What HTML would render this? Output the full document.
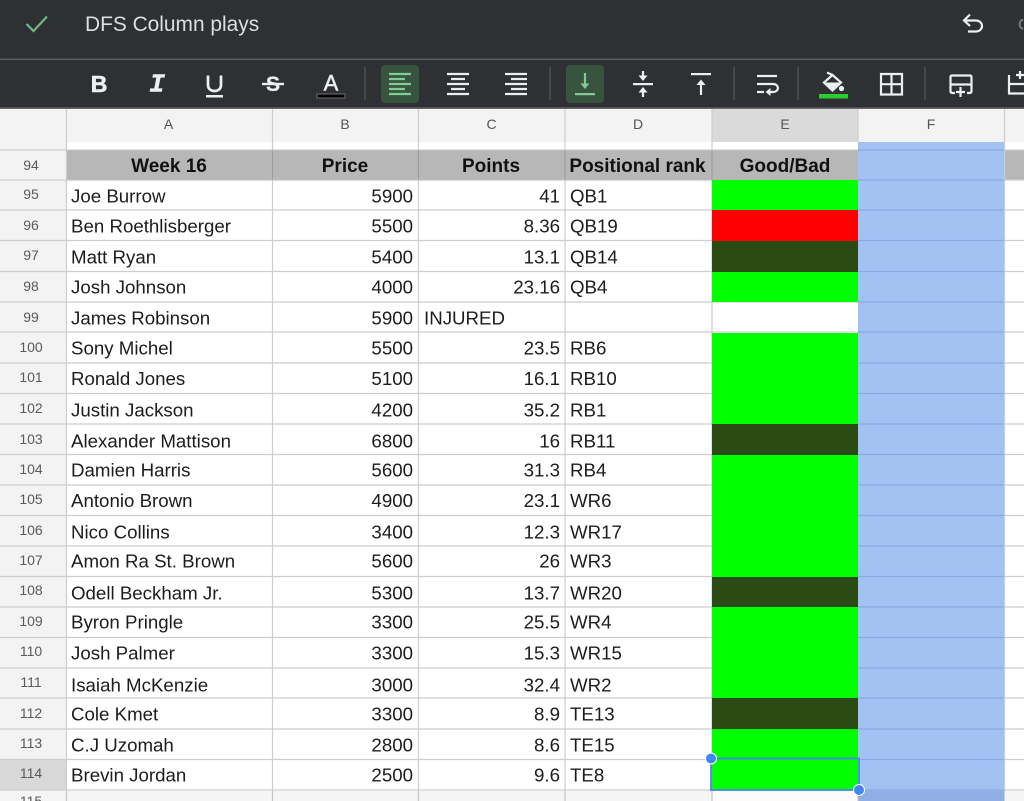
<!DOCTYPE html>
<html>
<head>
<meta charset="utf-8">
<style>
html,body{margin:0;padding:0;background:#fff;width:1024px;height:801px;overflow:hidden}
svg{display:block;filter:blur(0.3px)}
text{font-family:"Liberation Sans",sans-serif}
.t{font-size:18.7px;fill:#1c1c1c}
.r{font-size:18.7px;fill:#1c1c1c;text-anchor:end}
.h{font-size:19px;font-weight:bold;fill:#111;text-anchor:middle}
.n{font-size:14px;fill:#5a5a5a;text-anchor:middle}
.c{font-size:14px;fill:#555;text-anchor:middle}
.ic{fill:none;stroke:#eceff1;stroke-width:2.2}
.gl{stroke:#cdcdcd;stroke-width:1.2;fill:none}
.bl{stroke:#8aa9df;stroke-width:1.2;fill:none}
.sep{stroke:#56585b;stroke-width:1.2}
</style>
</head>
<body>
<svg width="1024" height="801" viewBox="0 0 1024 801" xmlns="http://www.w3.org/2000/svg">
<!-- top bars -->
<rect x="0" y="0" width="1024" height="109" fill="#2f3033"/>
<rect x="0" y="58.5" width="1024" height="1.5" fill="#5c5d60"/>
<rect x="0" y="107.5" width="1024" height="1.6" fill="#6a6b6d"/>
<path d="M26.500 24L33.500 31L47 16.500" fill="none" stroke="#6fb783" stroke-width="2.200"/>
<text x="85" y="31" font-size="20.900" fill="#dcdee0">DFS Column plays</text>
<path d="M970 14.500L964 20.500L970 26M965 20.500H976C979.500 20.500 982 23 982 26C982 29 979.500 31.500 976 31.500H968" class="ic"/>
<path d="M1023 19.500A5 5 0 0 0 1023 29" fill="none" stroke="#77797c" stroke-width="2"/>

<!-- B I U S A -->
<text x="99" y="92" font-size="23" font-weight="bold" fill="#eceff1" stroke="#eceff1" stroke-width="0.600" text-anchor="middle">B</text>
<text x="157" y="91.500" font-size="26" font-weight="bold" font-style="italic" fill="#eceff1" stroke="#eceff1" stroke-width="0.500" text-anchor="middle" style="font-family:'Liberation Mono',monospace">I</text>
<path d="M208 75.500V85C208 89 211 91 214.500 91C218 91 221 89 221 85V75.500" fill="none" stroke="#eceff1" stroke-width="2.700"/>
<rect x="206" y="95" width="17" height="2.500" fill="#eceff1"/>
<text x="273" y="91" font-size="21" font-weight="bold" fill="#eceff1" stroke="#eceff1" stroke-width="0.300" text-anchor="middle">S</text>
<rect x="262" y="82.800" width="22" height="2.400" fill="#eceff1"/>
<text x="331" y="90.500" font-size="22" fill="#eceff1" stroke="#eceff1" stroke-width="0.500" text-anchor="middle">A</text>
<rect x="317" y="94" width="28" height="4" fill="#000" stroke="#707174" stroke-width="1"/>
<line x1="365" y1="67" x2="365" y2="100" class="sep"/>

<!-- align -->
<rect x="381" y="65" width="38" height="38" rx="4" fill="#38543f"/>
<path d="M389 74H411M389 79H405M389 84H411M389 89H405M389 94H411" stroke="#81c995" stroke-width="2.200"/>
<g stroke="#eceff1" stroke-width="2.200">
<path d="M447 74H469M451 79H465M447 84H469M451 89H465M447 94H469"/>
<path d="M505 74H527M511 79H527M505 84H527M511 89H527M505 94H527"/>
</g>
<line x1="550" y1="67" x2="550" y2="100" class="sep"/>

<!-- vertical align -->
<rect x="566" y="65" width="38" height="38" rx="4" fill="#38543f"/>
<path d="M585 73V87" stroke="#81c995" stroke-width="2.200"/>
<path d="M580.500 83.500H589.500L585 89Z" fill="#81c995"/>
<rect x="575" y="93" width="20" height="2.200" fill="#81c995"/>
<rect x="633" y="83" width="20" height="2.200" fill="#eceff1"/>
<path d="M643 71V77M643 91V97" stroke="#eceff1" stroke-width="2.200"/>
<path d="M638.500 75.500H647.500L643 81Z M638.500 92.500H647.500L643 87Z" fill="#eceff1"/>
<rect x="691" y="73" width="20" height="2.200" fill="#eceff1"/>
<path d="M701 83V95" stroke="#eceff1" stroke-width="2.200"/>
<path d="M696.500 85H705.500L701 79.500Z" fill="#eceff1"/>
<line x1="734" y1="67" x2="734" y2="100" class="sep"/>

<!-- wrap -->
<path d="M757 76H777M757 84H773C779.500 84 779.500 92 773 92H767M757 92H764" class="ic"/>
<path d="M770.500 88L765.500 92L770.500 96Z" fill="#eceff1"/>
<line x1="798" y1="67" x2="798" y2="100" class="sep"/>

<!-- fill -->
<path d="M827 72.500L832.500 75M832.500 75L841 82.500L832.500 90.500L824 82.500Z" fill="none" stroke="#eceff1" stroke-width="2.200"/>
<path d="M825 82.500H840.500L832.500 89.500Z" fill="#eceff1"/>
<circle cx="841.500" cy="88.500" r="2.600" fill="#eceff1"/>
<rect x="819" y="94" width="29" height="4.500" fill="#2ecb2e"/>

<!-- borders -->
<path d="M881 74H902V94.500H881ZM891.500 74V94.500M881 84.200H902" class="ic"/>
<line x1="925" y1="67" x2="925" y2="100" class="sep"/>

<!-- insert -->
<path d="M955 93H952.500C951 93 950.500 92 950.500 91V77C950.500 76 951 75.500 952.500 75.500H969.500C971 75.500 971.500 76 971.500 77V91C971.500 92 971 93 969.500 93H967M950.500 84.500H971.500" class="ic"/>
<path d="M960.500 87V97M956 92H965" stroke="#eceff1" stroke-width="2.200"/>
<path d="M1009 75V93.500H1024M1009 84H1024M1020 71V79M1016 75H1024" class="ic"/>

<!-- column headers -->
<rect x="0" y="109" width="1024" height="33" fill="#f3f3f3"/>
<rect x="712" y="109" width="146" height="33" fill="#dadada"/>
<rect x="0" y="142" width="66" height="8" fill="#f3f3f3"/>
<text x="168.500" y="129" class="c">A</text>
<text x="345" y="129" class="c">B</text>
<text x="491.500" y="129" class="c">C</text>
<text x="638" y="129" class="c">D</text>
<text x="785" y="129" class="c">E</text>
<text x="931" y="129" class="c">F</text>

<!-- row number column -->
<rect x="0" y="150" width="66" height="651" fill="#f3f3f3"/>
<rect x="0" y="760" width="66" height="30" fill="#d8d8d8"/>

<!-- row 94 -->
<rect x="66" y="150" width="792" height="30" fill="#b7b7b7"/>
<rect x="1004" y="150" width="20" height="30" fill="#b7b7b7"/>

<!-- grid lines -->
<path class="gl" d="M0 150H66M1004 150H1024M0 180H66M1004 180H1024M0 210H712M1004 210H1024M0 240.500H712M1004 240.500H1024M0 271.500H712M1004 271.500H1024M0 302H858M1004 302H1024M0 332H858M1004 332H1024M0 363H712M1004 363H1024M0 393.500H712M1004 393.500H1024M0 424H712M1004 424H1024M0 454.500H712M1004 454.500H1024M0 485H712M1004 485H1024M0 515.500H712M1004 515.500H1024M0 546H712M1004 546H1024M0 576.500H712M1004 576.500H1024M0 607H712M1004 607H1024M0 637.500H712M1004 637.500H1024M0 668H712M1004 668H1024M0 698H712M1004 698H1024M0 729H712M1004 729H1024M0 759.500H712M1004 759.500H1024M0 790H858M1004 790H1024M66 180H712"/>
<path class="gl" d="M66.500 109V801M272.500 109V801M418.500 109V801M565 109V801M712 109V801M858 109V142M1004.500 109V801"/>
<path d="M272.500 150V180M418.500 150V180M565 150V180M712 150V180" stroke="#9c9c9c" stroke-width="1.200" fill="none"/>
<path d="M66 150H858" stroke="#c4c4c4" stroke-width="1" fill="none"/>
<path d="M66 180H712" stroke="#c0c0c0" stroke-width="1" fill="none"/>

<!-- colored cells -->
<rect x="712" y="180" width="146" height="30" fill="#00ff00"/>
<rect x="712" y="210" width="146" height="31" fill="#ff0000"/>
<rect x="712" y="241" width="146" height="31" fill="#2b4b14"/>
<rect x="712" y="272" width="146" height="30" fill="#00ff00"/>
<rect x="712" y="333" width="146" height="91" fill="#00ff00"/>
<rect x="712" y="424" width="146" height="31" fill="#2b4b14"/>
<rect x="712" y="455" width="146" height="122" fill="#00ff00"/>
<rect x="712" y="577" width="146" height="30" fill="#2b4b14"/>
<rect x="712" y="607" width="146" height="91" fill="#00ff00"/>
<rect x="712" y="698" width="146" height="31" fill="#2b4b14"/>
<rect x="712" y="729" width="146" height="61" fill="#00ff00"/>

<!-- F selection -->
<rect x="858" y="142" width="146" height="659" fill="#a3c2f4"/>
<path class="bl" d="M858 150H1004M858 180H1004M858 210H1004M858 240.500H1004M858 271.500H1004M858 302H1004M858 332H1004M858 363H1004M858 393.500H1004M858 424H1004M858 454.500H1004M858 485H1004M858 515.500H1004M858 546H1004M858 576.500H1004M858 607H1004M858 637.500H1004M858 668H1004M858 698H1004M858 729H1004M858 759.500H1004M858 790H1004"/>

<!-- bottom shade -->
<rect x="0" y="791" width="712" height="10" fill="#f5f5f5"/>
<rect x="712" y="791" width="146" height="10" fill="#fbfbfb"/>
<rect x="1005" y="791" width="19" height="10" fill="#f5f5f5"/>
<rect x="858" y="791" width="146" height="10" fill="#8faee6"/>
<path d="M66.500 791V801M272.500 791V801M418.500 791V801M565 791V801M712 791V801M858 791V801" stroke="#c6c6c6" stroke-width="1.200"/>
<text x="31" y="806" class="n">115</text>

<!-- row numbers -->
<text x="31" y="170" class="n">94</text>
<text x="31" y="199" class="n">95</text>
<text x="31" y="230" class="n">96</text>
<text x="31" y="260" class="n">97</text>
<text x="31" y="291" class="n">98</text>
<text x="31" y="322" class="n">99</text>
<text x="31" y="352" class="n">100</text>
<text x="31" y="382" class="n">101</text>
<text x="31" y="413" class="n">102</text>
<text x="31" y="444" class="n">103</text>
<text x="31" y="474" class="n">104</text>
<text x="31" y="504" class="n">105</text>
<text x="31" y="535" class="n">106</text>
<text x="31" y="565" class="n">107</text>
<text x="31" y="595" class="n">108</text>
<text x="31" y="626" class="n">109</text>
<text x="31" y="656" class="n">110</text>
<text x="31" y="687" class="n">111</text>
<text x="31" y="718" class="n">112</text>
<text x="31" y="748" class="n">113</text>
<text x="31" y="778" class="n">114</text>

<!-- header text -->
<text x="169" y="172" class="h">Week 16</text>
<text x="345" y="172" class="h">Price</text>
<text x="491" y="172" class="h">Points</text>
<text x="637.500" y="172" class="h">Positional rank</text>
<text x="785" y="172" class="h">Good/Bad</text>

<!-- rows -->
<text x="71" y="202.500" class="t">Joe Burrow</text><text x="413" y="202.500" class="r">5900</text><text x="560" y="202.500" class="r">41</text><text x="570" y="202.500" class="t">QB1</text>
<text x="71" y="232.500" class="t">Ben Roethlisberger</text><text x="413" y="232.500" class="r">5500</text><text x="560" y="232.500" class="r">8.36</text><text x="570" y="232.500" class="t">QB19</text>
<text x="71" y="263.500" class="t">Matt Ryan</text><text x="413" y="263.500" class="r">5400</text><text x="560" y="263.500" class="r">13.1</text><text x="570" y="263.500" class="t">QB14</text>
<text x="71" y="293.500" class="t">Josh Johnson</text><text x="413" y="293.500" class="r">4000</text><text x="560" y="293.500" class="r">23.16</text><text x="570" y="293.500" class="t">QB4</text>
<text x="71" y="324.500" class="t">James Robinson</text><text x="413" y="324.500" class="r">5900</text><text x="424" y="324.500" class="t">INJURED</text>
<text x="71" y="354.500" class="t">Sony Michel</text><text x="413" y="354.500" class="r">5500</text><text x="560" y="354.500" class="r">23.5</text><text x="570" y="354.500" class="t">RB6</text>
<text x="71" y="385" class="t">Ronald Jones</text><text x="413" y="385" class="r">5100</text><text x="560" y="385" class="r">16.1</text><text x="570" y="385" class="t">RB10</text>
<text x="71" y="416.500" class="t">Justin Jackson</text><text x="413" y="416.500" class="r">4200</text><text x="560" y="416.500" class="r">35.2</text><text x="570" y="416.500" class="t">RB1</text>
<text x="71" y="447.500" class="t">Alexander Mattison</text><text x="413" y="447.500" class="r">6800</text><text x="560" y="447.500" class="r">16</text><text x="570" y="447.500" class="t">RB11</text>
<text x="71" y="476.500" class="t">Damien Harris</text><text x="413" y="476.500" class="r">5600</text><text x="560" y="476.500" class="r">31.3</text><text x="570" y="476.500" class="t">RB4</text>
<text x="71" y="507" class="t">Antonio Brown</text><text x="413" y="507" class="r">4900</text><text x="560" y="507" class="r">23.1</text><text x="570" y="507" class="t">WR6</text>
<text x="71" y="538.500" class="t">Nico Collins</text><text x="413" y="538.500" class="r">3400</text><text x="560" y="538.500" class="r">12.3</text><text x="570" y="538.500" class="t">WR17</text>
<text x="71" y="567.500" class="t">Amon Ra St. Brown</text><text x="413" y="567.500" class="r">5600</text><text x="560" y="567.500" class="r">26</text><text x="570" y="567.500" class="t">WR3</text>
<text x="71" y="599.500" class="t">Odell Beckham Jr.</text><text x="413" y="599.500" class="r">5300</text><text x="560" y="599.500" class="r">13.7</text><text x="570" y="599.500" class="t">WR20</text>
<text x="71" y="628.500" class="t">Byron Pringle</text><text x="413" y="628.500" class="r">3300</text><text x="560" y="628.500" class="r">25.5</text><text x="570" y="628.500" class="t">WR4</text>
<text x="71" y="659.500" class="t">Josh Palmer</text><text x="413" y="659.500" class="r">3300</text><text x="560" y="659.500" class="r">15.3</text><text x="570" y="659.500" class="t">WR15</text>
<text x="71" y="691.500" class="t">Isaiah McKenzie</text><text x="413" y="691.500" class="r">3000</text><text x="560" y="691.500" class="r">32.4</text><text x="570" y="691.500" class="t">WR2</text>
<text x="71" y="720.500" class="t">Cole Kmet</text><text x="413" y="720.500" class="r">3300</text><text x="560" y="720.500" class="r">8.9</text><text x="570" y="720.500" class="t">TE13</text>
<text x="71" y="751.500" class="t">C.J Uzomah</text><text x="413" y="751.500" class="r">2800</text><text x="560" y="751.500" class="r">8.6</text><text x="570" y="751.500" class="t">TE15</text>
<text x="71" y="781.500" class="t">Brevin Jordan</text><text x="413" y="781.500" class="r">2500</text><text x="560" y="781.500" class="r">9.6</text><text x="570" y="781.500" class="t">TE8</text>

<!-- selected cell -->
<rect x="711" y="758.500" width="148" height="31.500" fill="none" stroke="#4a86e8" stroke-width="1.800"/>
<circle cx="711" cy="758.500" r="5.500" fill="#4285f4" stroke="#fff" stroke-width="1"/>
<circle cx="859" cy="790" r="5.500" fill="#4285f4" stroke="#fff" stroke-width="1"/>
</svg>
</body>
</html>
